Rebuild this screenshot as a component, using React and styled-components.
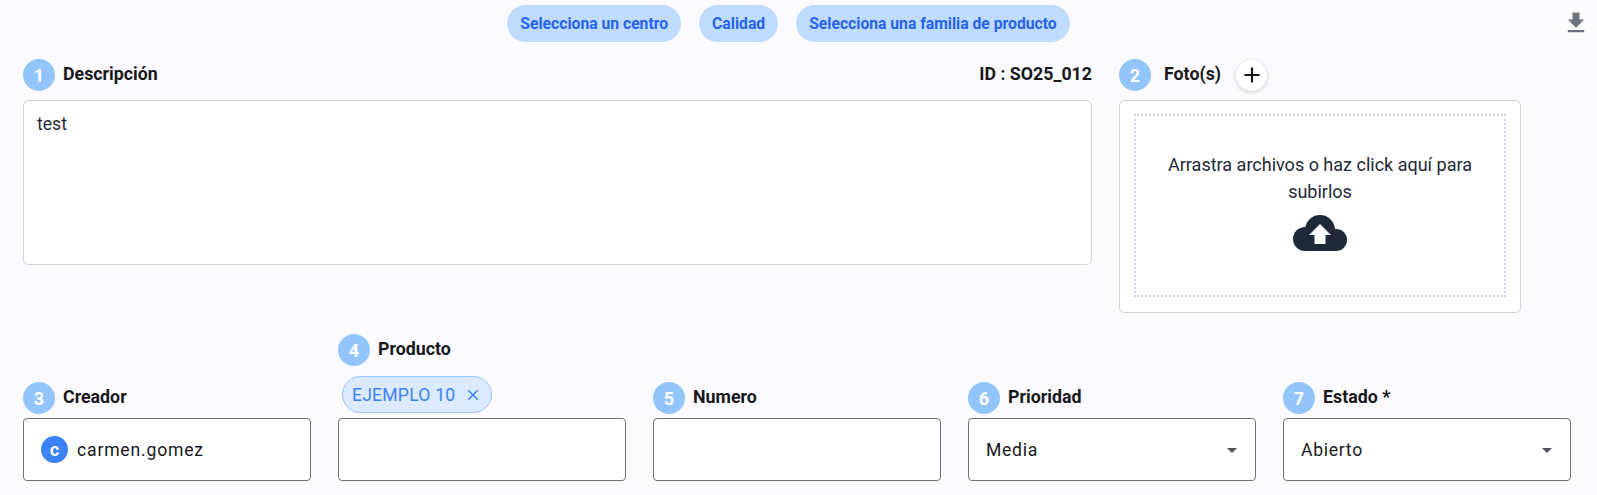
import React from 'react';
import styled, { createGlobalStyle } from 'styled-components';
import { MdFileDownload, MdAdd, MdClose, MdArrowDropDown } from 'react-icons/md';

const GlobalStyle = createGlobalStyle`
  body {
    margin: 0;
    background: #fafaff;
    font-family: Roboto, "Liberation Sans", sans-serif;
    color: #1f2937;
  }
`;

const Page = styled.div`
  padding: 5px 7px 14px 23px;
`;

const Toolbar = styled.div`
  display: grid;
  grid-template-columns: 1fr auto;
  margin-bottom: 17px;
`;

const Pills = styled.div`
  display: flex;
  justify-content: center;
  gap: 18px;
  padding-right: 8px;
`;

const Pill = styled.button`
  height: 37px;
  padding: 0 13px;
  border: 0;
  border-radius: 19px;
  background: #bfdbfe;
  color: #2563eb;
  font: 700 15.7px Roboto, sans-serif;
`;

const DownloadButton = styled.div`
  display: flex;
  margin-top: 4px;
  height: 28px;
  color: #6b7280;
`;

const TopRow = styled.div`
  display: grid;
  grid-template-columns: 1069px 402px;
  gap: 27px;
  margin-bottom: 21px;
`;

const Column = styled.div`
  display: flex;
  flex-direction: column;
`;

const Header = styled.div`
  display: flex;
  align-items: center;
  height: 32px;
  margin-bottom: ${props => props.$gap || 4}px;
`;

const Step = styled.span`
  display: flex;
  align-items: center;
  justify-content: center;
  flex: none;
  width: 32px;
  height: 32px;
  border-radius: 50%;
  background: #93c5fd;
  color: #fff;
  font-size: 18px;
  font-weight: 700;
`;

const Label = styled.span`
  margin-left: ${props => props.$offset || 8}px;
  margin-top: -3px;
  color: #18181b;
  font-size: 17.8px;
  font-weight: 700;
`;

const ItemId = styled.span`
  margin-left: auto;
  margin-top: -3px;
  color: #18181b;
  font-size: 17.8px;
  font-weight: 700;
`;

const AddButton = styled.button`
  display: flex;
  align-items: center;
  justify-content: center;
  width: 31px;
  height: 31px;
  margin-left: 15px;
  padding: 0;
  border: 0;
  border-radius: 50%;
  background: #fff;
  color: #18181b;
  box-shadow: 0 1px 4px rgba(0, 0, 0, 0.2);
`;

const Description = styled.div`
  box-sizing: border-box;
  height: 165px;
  padding: 13px 13px;
  border: 1px solid #cbd5e1;
  border-radius: 6px;
  background: #fff;
  font-size: 17.6px;
  line-height: 20px;
`;

const PhotoPanel = styled.div`
  box-sizing: border-box;
  height: 213px;
  padding: 13px 14px 15px;
  border: 1px solid #cbd5e1;
  border-radius: 6px;
  background: #fff;
`;

const DropZone = styled.div`
  box-sizing: border-box;
  height: 100%;
  display: flex;
  flex-direction: column;
  align-items: center;
  padding: 35px 24px 0;
  border: 2px dotted #cbd5e1;
  text-align: center;
  font-size: 18px;
  line-height: 27px;
`;

const CloudSvg = styled.svg`
  width: 54px;
  height: 36px;
  margin-top: 10px;
  color: #1f2937;
`;

const BottomRow = styled.div`
  display: grid;
  grid-template-columns: repeat(5, 288px);
  gap: 27px;
  align-items: end;
`;

const Chip = styled.div`
  display: inline-flex;
  align-items: center;
  align-self: flex-start;
  box-sizing: border-box;
  height: 37px;
  margin: 0 0 5px 4px;
  padding: 0 9px;
  border: 1px solid #93c5fd;
  border-radius: 19px;
  background: #dbeafe;
  color: #3b82f6;
  font-size: 17.6px;
  letter-spacing: 0.2px;
  gap: 9px;
`;

const FieldBox = styled.div`
  display: flex;
  align-items: center;
  box-sizing: border-box;
  height: 63px;
  padding: 0 ${props => props.$select ? '11px' : '17px'} 0 ${props => props.$select ? '13px' : '17px'};
  border: 1px solid #71717a;
  border-radius: 4px;
  background: #fff;
  color: #18181b;
  font-size: 17.6px;
  letter-spacing: 0.8px;
  justify-content: ${props => props.$select ? 'space-between' : 'flex-start'};
`;

const SelectValue = styled.span`
  margin-left: 4px;
  letter-spacing: 0.7px;
`;

const Avatar = styled.span`
  display: flex;
  align-items: center;
  justify-content: center;
  width: 27px;
  height: 27px;
  margin-right: 9px;
  border-radius: 50%;
  background: #3b82f6;
  color: #fff;
  font-size: 18px;
  font-weight: 700;
  letter-spacing: 0;
`;

const Arrow = styled(MdArrowDropDown)`
  width: 24px;
  height: 24px;
  color: #52525b;
`;

function CloudUpload() {
  return (
    <CloudSvg viewBox="0 0 54 36">
      <g fill="currentColor">
        <circle cx="27" cy="15" r="15" />
        <circle cx="12" cy="24" r="12" />
        <circle cx="43" cy="25" r="11" />
        <rect x="12" y="20" width="31" height="16" />
      </g>
      <polygon fill="#fff" points="27,9 16,20 21.5,20 21.5,29 32.5,29 32.5,20 38,20" />
    </CloudSvg>
  );
}

function Field({ step, label, gap, children }) {
  return (
    <Header $gap={gap}>
      <Step>{step}</Step>
      <Label>{label}</Label>
      {children}
    </Header>
  );
}

export default function App() {
  return (
    <Page>
      <GlobalStyle />
      <Toolbar>
        <Pills>
          <Pill>Selecciona un centro</Pill>
          <Pill>Calidad</Pill>
          <Pill>Selecciona una familia de producto</Pill>
        </Pills>
        <DownloadButton><MdFileDownload size={28} /></DownloadButton>
      </Toolbar>

      <TopRow>
        <Column>
          <Header $gap={9}>
            <Step>1</Step>
            <Label>Descripción</Label>
            <ItemId>ID : SO25_012</ItemId>
          </Header>
          <Description>test</Description>
        </Column>
        <Column>
          <Header $gap={9}>
            <Step>2</Step>
            <Label $offset={13}>Foto(s)</Label>
            <AddButton><MdAdd size={26} /></AddButton>
          </Header>
          <PhotoPanel>
            <DropZone>
              Arrastra archivos o haz click aquí para subirlos
              <CloudUpload />
            </DropZone>
          </PhotoPanel>
        </Column>
      </TopRow>

      <BottomRow>
        <Column>
          <Field step="3" label="Creador" />
          <FieldBox><Avatar>c</Avatar>carmen.gomez</FieldBox>
        </Column>
        <Column>
          <Field step="4" label="Producto" gap={10} />
          <Chip>EJEMPLO 10 <MdClose size={18} /></Chip>
          <FieldBox />
        </Column>
        <Column>
          <Field step="5" label="Numero" />
          <FieldBox />
        </Column>
        <Column>
          <Field step="6" label="Prioridad" />
          <FieldBox $select><SelectValue>Media</SelectValue><Arrow /></FieldBox>
        </Column>
        <Column>
          <Field step="7" label="Estado *" />
          <FieldBox $select><SelectValue>Abierto</SelectValue><Arrow /></FieldBox>
        </Column>
      </BottomRow>
    </Page>
  );
}
